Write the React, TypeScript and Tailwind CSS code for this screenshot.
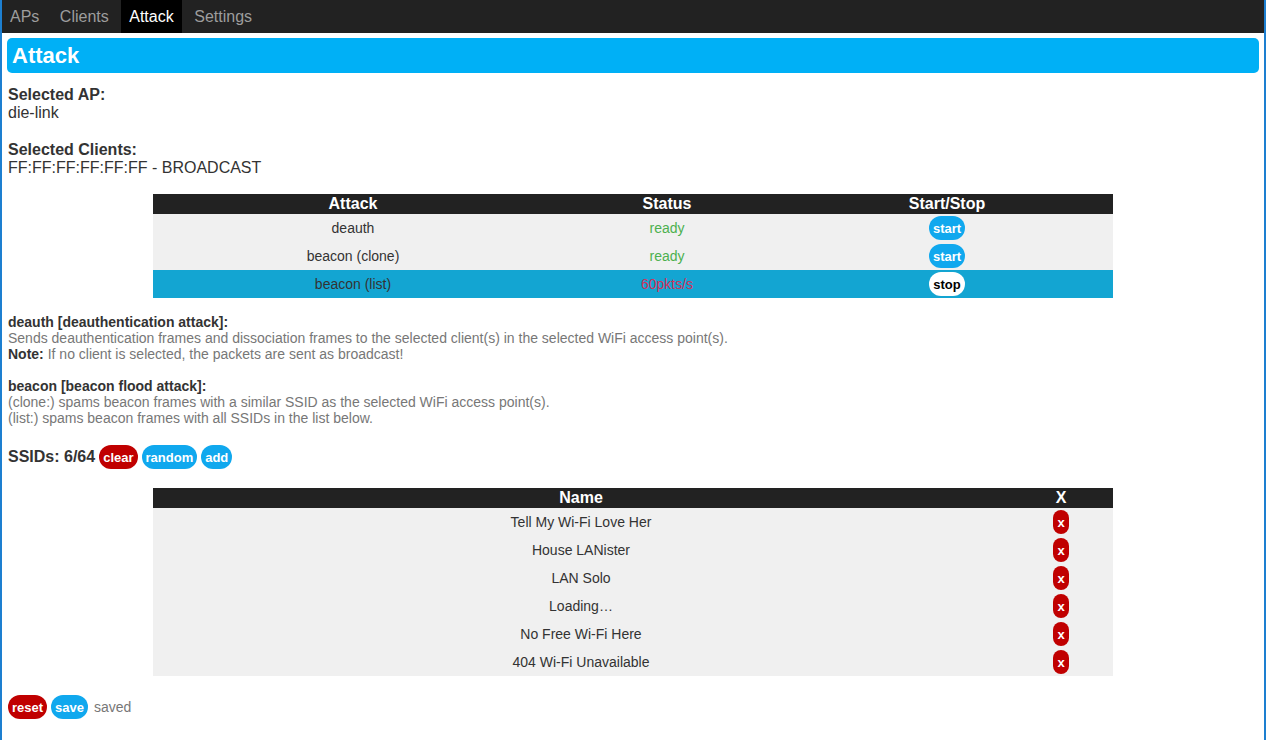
import React from 'react'

const attacks = [
  { name: 'deauth', status: 'ready', running: false },
  { name: 'beacon (clone)', status: 'ready', running: false },
  { name: 'beacon (list)', status: '60pkts/s', running: true },
]

const ssids = [
  'Tell My Wi-Fi Love Her',
  'House LANister',
  'LAN Solo',
  'Loading…',
  'No Free Wi-Fi Here',
  '404 Wi-Fi Unavailable',
]

function Pill({ children, color }: { children: React.ReactNode; color: 'blue' | 'red' | 'white' }) {
  const tone =
    color === 'blue'
      ? 'bg-[#10a8ee] text-white'
      : color === 'red'
        ? 'bg-[#c00000] text-white'
        : 'bg-white text-black'
  return (
    <button className={`inline-flex h-6 items-center rounded-full px-1 text-[13px] font-bold leading-none ${tone}`}>
      {children}
    </button>
  )
}

export default function App() {
  const tabs = ['APs', 'Clients', 'Attack', 'Settings']

  return (
    <div
      className="min-h-[740px] border-x-2 border-[#1d7fd0] bg-white text-[#333]"
      style={{ fontFamily: '"Liberation Sans", Arial, sans-serif' }}
    >
      {/* Top navigation */}
      <nav className="flex h-[33px] gap-[4.5px] bg-[#222]">
        {tabs.map((tab) => (
          <a
            key={tab}
            className={`flex items-center px-2 text-base ${
              tab === 'Attack' ? 'bg-black text-white' : 'text-[#9d9d9d]'
            }`}
          >
            {tab}
          </a>
        ))}
      </nav>

      <div className="px-[5px] pt-[5px]">
        <h1 className="flex h-[35px] items-center rounded-[5px] bg-[#00b0f6] px-[5px] text-[22px] font-bold text-white">
          Attack
        </h1>
      </div>

      <div className="px-[6px] pt-[13px]">
        <div className="text-base leading-[18px]">
          <p className="font-bold">Selected AP:</p>
          <p>die-link</p>
          <p className="mt-[19px] font-bold">Selected Clients:</p>
          <p>FF:FF:FF:FF:FF:FF - BROADCAST</p>
        </div>

        {/* Attack table */}
        <table className="mx-auto mt-[17px] w-[960px] border-collapse text-center">
          <thead>
            <tr className="h-5 bg-[#222] text-base font-bold leading-5 text-white">
              <th className="w-[400px]">Attack</th>
              <th className="w-[228px]">Status</th>
              <th>Start/Stop</th>
            </tr>
          </thead>
          <tbody className="text-sm">
            {attacks.map((a) => (
              <tr key={a.name} className={`h-7 ${a.running ? 'bg-[#13a5d2]' : 'bg-[#f0f0f0]'}`}>
                <td>{a.name}</td>
                <td className={a.running ? 'text-[#d2305a]' : 'text-[#4cb04f]'}>{a.status}</td>
                <td>
                  {a.running ? <Pill color="white">stop</Pill> : <Pill color="blue">start</Pill>}
                </td>
              </tr>
            ))}
          </tbody>
        </table>

        {/* Descriptions */}
        <div className="mt-[16px] text-sm leading-4 text-[#777]">
          <p className="font-bold text-[#333]">deauth [deauthentication attack]:</p>
          <p>Sends deauthentication frames and dissociation frames to the selected client(s) in the selected WiFi access point(s).</p>
          <p>
            <span className="font-bold text-[#333]">Note:</span> If no client is selected, the packets are sent as broadcast!
          </p>
          <p className="mt-4 font-bold text-[#333]">beacon [beacon flood attack]:</p>
          <p>(clone:) spams beacon frames with a similar SSID as the selected WiFi access point(s).</p>
          <p>(list:) spams beacon frames with all SSIDs in the list below.</p>
        </div>

        {/* SSIDs */}
        <div className="mt-[19px] flex items-center gap-1">
          <span className="text-base font-bold">SSIDs: 6/64</span>
          <Pill color="red">clear</Pill>
          <Pill color="blue">random</Pill>
          <Pill color="blue">add</Pill>
        </div>

        <table className="mx-auto mt-[19px] w-[960px] border-collapse text-center">
          <thead>
            <tr className="h-5 bg-[#222] text-base font-bold leading-5 text-white">
              <th>Name</th>
              <th className="w-[104px]">X</th>
            </tr>
          </thead>
          <tbody className="text-sm">
            {ssids.map((s) => (
              <tr key={s} className="h-7 bg-[#f0f0f0]">
                <td>{s}</td>
                <td>
                  <Pill color="red">x</Pill>
                </td>
              </tr>
            ))}
          </tbody>
        </table>

        <div className="mt-[19px] flex items-center gap-1">
          <Pill color="red">reset</Pill>
          <Pill color="blue">save</Pill>
          <span className="ml-0.5 text-sm text-[#777]">saved</span>
        </div>
      </div>
    </div>
  )
}
